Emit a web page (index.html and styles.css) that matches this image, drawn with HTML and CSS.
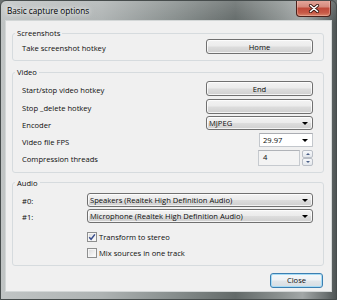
FILE: index.html
```html
<!DOCTYPE html>
<html>
<head>
<meta charset="utf-8">
<title>Basic capture options</title>
<link rel="stylesheet" href="styles.css">
</head>
<body>
<div class="window">
  <div class="titlebar">
    <span class="title">Basic capture options</span>
    <div class="close-x">
      <svg width="12" height="9" viewBox="0 0 12 9">
        <path d="M2.5 1.5 L9.5 7.5 M9.5 1.5 L2.5 7.5" stroke="#3a1812" stroke-width="3.2" stroke-linecap="round" fill="none"/>
        <path d="M2.5 1.5 L9.5 7.5 M9.5 1.5 L2.5 7.5" stroke="#ffffff" stroke-width="1.6" stroke-linecap="round" fill="none"/>
      </svg>
    </div>
  </div>
  <div class="client">
    <fieldset class="group group-shots">
      <legend>Screenshots</legend>
      <div class="body grid-hk">
        <span class="lbl">Take screenshot hotkey</span>
        <button class="btn">Home</button>
      </div>
    </fieldset>

    <fieldset class="group group-video">
      <legend>Video</legend>
      <div class="body grid-video">
        <span class="lbl">Start/stop video hotkey</span>
        <button class="btn">End</button>
        <span class="lbl">Stop _delete hotkey</span>
        <button class="btn"></button>
        <span class="lbl">Encoder</span>
        <div class="combo"><span class="combo-text">MJPEG</span><span class="arrow"></span></div>
        <span class="lbl">Video file FPS</span>
        <div class="ecombo"><span class="combo-text">29.97</span><span class="arrow"></span></div>
        <span class="lbl">Compression threads</span>
        <div class="spin">
          <div class="spin-edit">4</div>
          <div class="spin-btns">
            <div class="spin-btn"><span class="tri-up"></span></div>
            <div class="spin-btn"><span class="tri-down"></span></div>
          </div>
        </div>
      </div>
    </fieldset>

    <fieldset class="group group-audio">
      <legend>Audio</legend>
      <div class="body audio-body">
        <div class="grid-audio">
          <span class="lbl">#0:</span>
          <div class="combo"><span class="combo-text">Speakers (Realtek High Definition Audio)</span><span class="arrow"></span></div>
          <span class="lbl">#1:</span>
          <div class="combo"><span class="combo-text">Microphone (Realtek High Definition Audio)</span><span class="arrow"></span></div>
        </div>
        <div class="checks">
          <label class="check">
            <span class="box checked">
              <svg width="8" height="8" viewBox="0 0 8 8"><path d="M1.2 4.2 L3.1 6.3 L6.9 1.4" stroke="#3a4f8e" stroke-width="1.5" fill="none"/></svg>
            </span>
            <span>Transform to stereo</span>
          </label>
          <label class="check">
            <span class="box"></span>
            <span>Mix sources in one track</span>
          </label>
        </div>
      </div>
    </fieldset>

    <button class="btn btn-default close-btn">Close</button>
  </div>
</div>
</body>
</html>
```

FILE: styles.css
```css
* { box-sizing: border-box; }
html, body { margin: 0; padding: 0; }
body {
  width: 337px;
  height: 300px;
  overflow: hidden;
  background: #6b7171;
  font-family: "Open Sans", "Noto Sans", sans-serif;
}
.window {
  width: 337px;
  height: 300px;
  border: 1px solid #464c4c;
  border-radius: 6px 6px 0 0;
  background:
    linear-gradient(180deg, rgba(255,255,255,0.16) 0, rgba(255,255,255,0) 22px),
    linear-gradient(90deg, #c0c4c4 0%, #aeb3b3 30%, #868d8c 52%, #636a69 70%, #8d9392 84%, #a2a7a7 90%, #6c7272 97%, #4e5454 100%);
  display: flex;
  flex-direction: column;
  overflow: hidden;
}
.titlebar {
  flex: none;
  height: 20px;
  display: flex;
  align-items: center;
  padding-left: 6px;
}
.title {
  font-size: 8.2px;
  line-height: 10px;
  color: #000;
  text-shadow: 0 0 4px #fff, 0 0 7px rgba(255,255,255,0.9);
}
.close-x {
  margin-left: auto;
  margin-right: 5px;
  margin-top: -1px;
  align-self: flex-start;
  width: 35px;
  height: 17px;
  border: 1px solid #4b211b;
  border-top: none;
  border-radius: 0 0 4px 4px;
  background: linear-gradient(180deg, #e6aa9f 0%, #d58a7d 42%, #bf4a3a 52%, #c85a47 80%, #d8866c 100%);
  box-shadow: inset 0 0 0 1px rgba(255,215,205,0.35);
  display: flex;
  align-items: center;
  justify-content: center;
}
.client {
  flex: none;
  margin: 0 5px;
  height: 270px;
  background: #f0f0f0;
  box-shadow: 0 0 0 1px #d3d7d7;
  padding: 7px 7px 0 6px;
  display: flex;
  flex-direction: column;
  font-size: 7.6px;
  color: #0d0d0d;
}
.group {
  margin: 0;
  padding: 0;
  min-width: 0;
  border: 1px solid #d6dbde;
  border-radius: 3px;
}
.group legend {
  margin-left: 2px;
  padding: 0 2px;
  height: 10px;
  line-height: 10px;
  font-size: 7.6px;
}
.group-video { margin-top: 6px; }
.group-audio { margin-top: 5px; }

.body { padding-left: 9px; padding-right: 10px; }
.grid-hk {
  display: grid;
  grid-template-columns: 1fr 107px;
  padding-top: 1px;
  padding-bottom: 6px;
}
.grid-video {
  display: grid;
  grid-template-columns: 1fr 107px;
  grid-template-rows: 15px 15px 14px 14px 16px;
  row-gap: 2.7px;
  padding-top: 4px;
  padding-bottom: 6px;
}
.audio-body {
  display: flex;
  flex-direction: column;
  padding-top: 5px;
  padding-bottom: 6px;
}
.grid-audio {
  display: grid;
  grid-template-columns: 65px 1fr;
  grid-template-rows: 14px 14px;
  row-gap: 2px;
}
.lbl {
  align-self: center;
  line-height: 10px;
  padding-top: 3px;
  white-space: nowrap;
}
.btn {
  margin: 0;
  padding: 0;
  height: 15px;
  font: inherit;
  color: #0d0d0d;
  line-height: 12px;
  border: 1px solid #707070;
  border-radius: 3px;
  background: linear-gradient(180deg, #f3f3f3 0%, #ebebeb 48%, #dddddd 52%, #cfcfcf 100%);
  box-shadow: inset 0 0 0 1px rgba(255,255,255,0.75);
}
.combo, .ecombo {
  display: flex;
  align-items: center;
  height: 14px;
  padding-left: 2px;
  line-height: 10px;
  white-space: nowrap;
  overflow: hidden;
}
.combo {
  border: 1px solid #707070;
  border-radius: 3px;
  background: linear-gradient(180deg, #f3f3f3 0%, #ebebeb 48%, #dddddd 52%, #cfcfcf 100%);
  box-shadow: inset 0 0 0 1px rgba(255,255,255,0.75);
}
.ecombo {
  justify-self: end;
  width: 54px;
  padding-left: 3px;
  background: #ffffff;
  border: 1px solid #c3c7cc;
  border-top-color: #abadb3;
}
.combo-text { flex: 1; overflow: hidden; }
.arrow {
  flex: none;
  width: 0;
  height: 0;
  margin: 1px 4px 0 2px;
  border-left: 3px solid transparent;
  border-right: 3px solid transparent;
  border-top: 3px solid #000;
}
.spin {
  justify-self: end;
  width: 55px;
  height: 16px;
  display: flex;
  gap: 2px;
}
.spin-edit {
  flex: 1;
  padding-left: 4px;
  line-height: 13px;
  background: #f3f3f3;
  border: 1px solid #c6cacf;
  border-top-color: #b0b3b8;
}
.spin-btns {
  width: 11px;
  display: flex;
  flex-direction: column;
}
.spin-btn {
  flex: 1;
  display: flex;
  align-items: center;
  justify-content: center;
  border: 1px solid #b9bec6;
  border-radius: 2px;
  background: linear-gradient(180deg, #f7f8fa 0%, #e3e7ec 100%);
}
.tri-up, .tri-down {
  width: 0;
  height: 0;
  border-left: 2px solid transparent;
  border-right: 2px solid transparent;
}
.tri-up { border-bottom: 2px solid #4b5f86; }
.tri-down { border-top: 2px solid #4b5f86; }

.checks {
  margin-top: 9px;
  padding-left: 65px;
  display: flex;
  flex-direction: column;
  gap: 5px;
}
.check {
  height: 11px;
  display: flex;
  align-items: center;
  gap: 2px;
  line-height: 10px;
  white-space: nowrap;
}
.box {
  flex: none;
  width: 10px;
  height: 10px;
  border: 1px solid #8e8f8f;
  background: linear-gradient(135deg, #d8d9da 0%, #f4f4f4 70%, #ffffff 100%);
  box-shadow: inset 0 0 0 1px #f6f6f6;
  display: flex;
  align-items: center;
  justify-content: center;
}
.close-btn {
  align-self: flex-end;
  margin-top: 7px;
  margin-right: 1px;
  width: 53px;
  height: 15px;
}
.btn-default {
  border-color: #3c7fb1;
  background: linear-gradient(180deg, #f5f8fa 0%, #eef2f5 48%, #e1e6ea 52%, #d6dde2 100%);
  box-shadow: inset 0 0 0 1px #a6dcf6;
}
```
